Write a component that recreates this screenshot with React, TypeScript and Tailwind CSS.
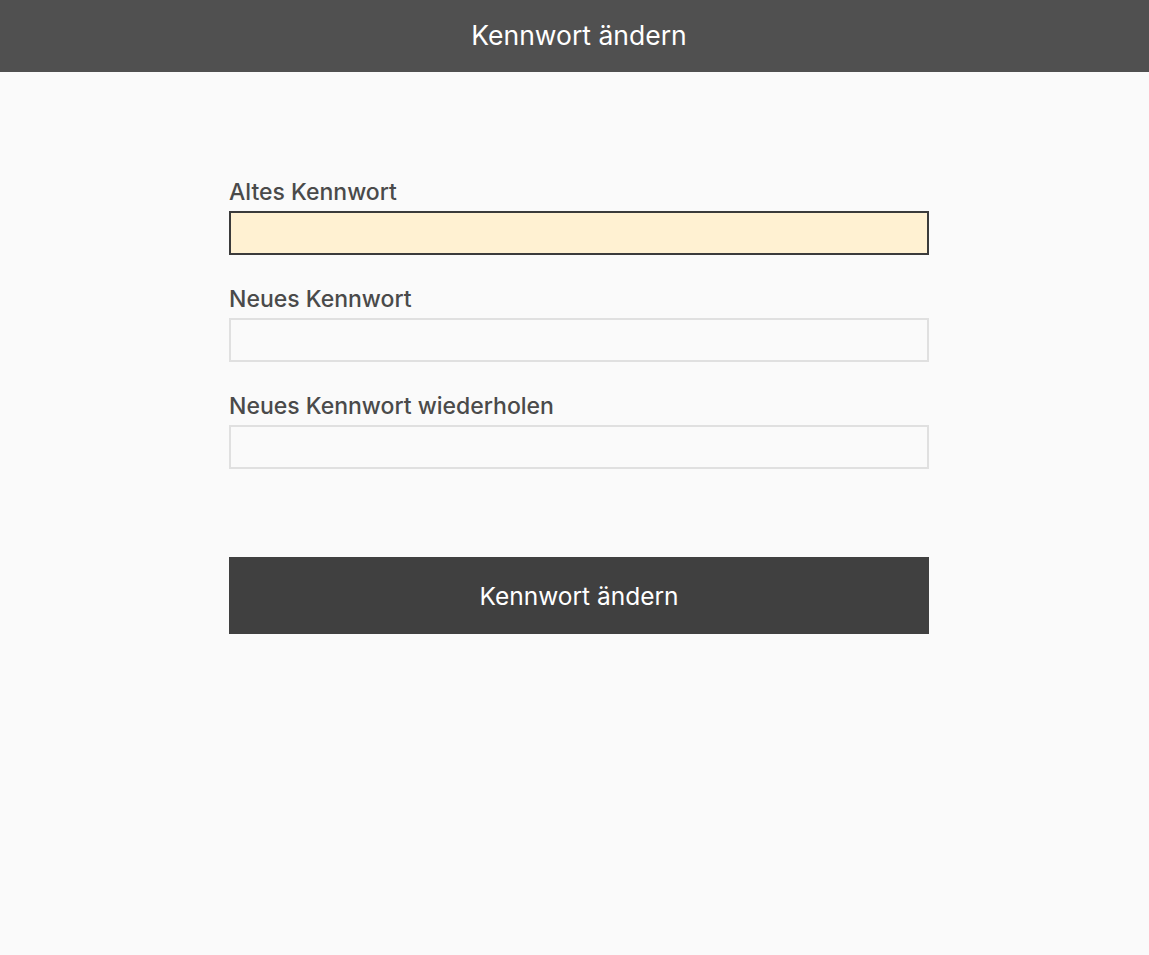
import React from 'react';

const font = { fontFamily: 'Inter, "Noto Sans", sans-serif' };

interface FeldProps {
  label: string;
  aktiv?: boolean;
}

function Feld({ label, aktiv }: FeldProps) {
  return (
    <div className="mb-[29px] flex flex-col">
      <label className="mb-[4px] text-[23px] leading-[30px] font-medium text-[#4a4a4a]">{label}</label>
      <input
        type="password"
        className={
          aktiv
            ? 'h-[44px] w-full border-2 border-[#3b3b3b] bg-[#fff1d2] outline-none'
            : 'h-[44px] w-full border-2 border-[#e0e0e0] bg-[#fafafa] outline-none'
        }
      />
    </div>
  );
}

export default function App() {
  return (
    <div className="min-h-[955px] bg-[#fafafa]" style={font}>
      <header className="flex h-[72px] items-center justify-center bg-[#505050] pl-[9px] pb-[1px]">
        <h1 className="text-[26.5px] text-white">Kennwort ändern</h1>
      </header>

      <main className="flex justify-center pl-[9px] pt-[105px]">
        <form className="w-[700px]" onSubmit={e => e.preventDefault()}>
          <Feld label="Altes Kennwort" aktiv />
          <Feld label="Neues Kennwort" />
          <Feld label="Neues Kennwort wiederholen" />

          <button
            type="submit"
            className="mt-[59px] h-[77px] w-full bg-[#404040] pt-[2px] text-[24.5px] text-white"
          >
            Kennwort ändern
          </button>
        </form>
      </main>
    </div>
  );
}
